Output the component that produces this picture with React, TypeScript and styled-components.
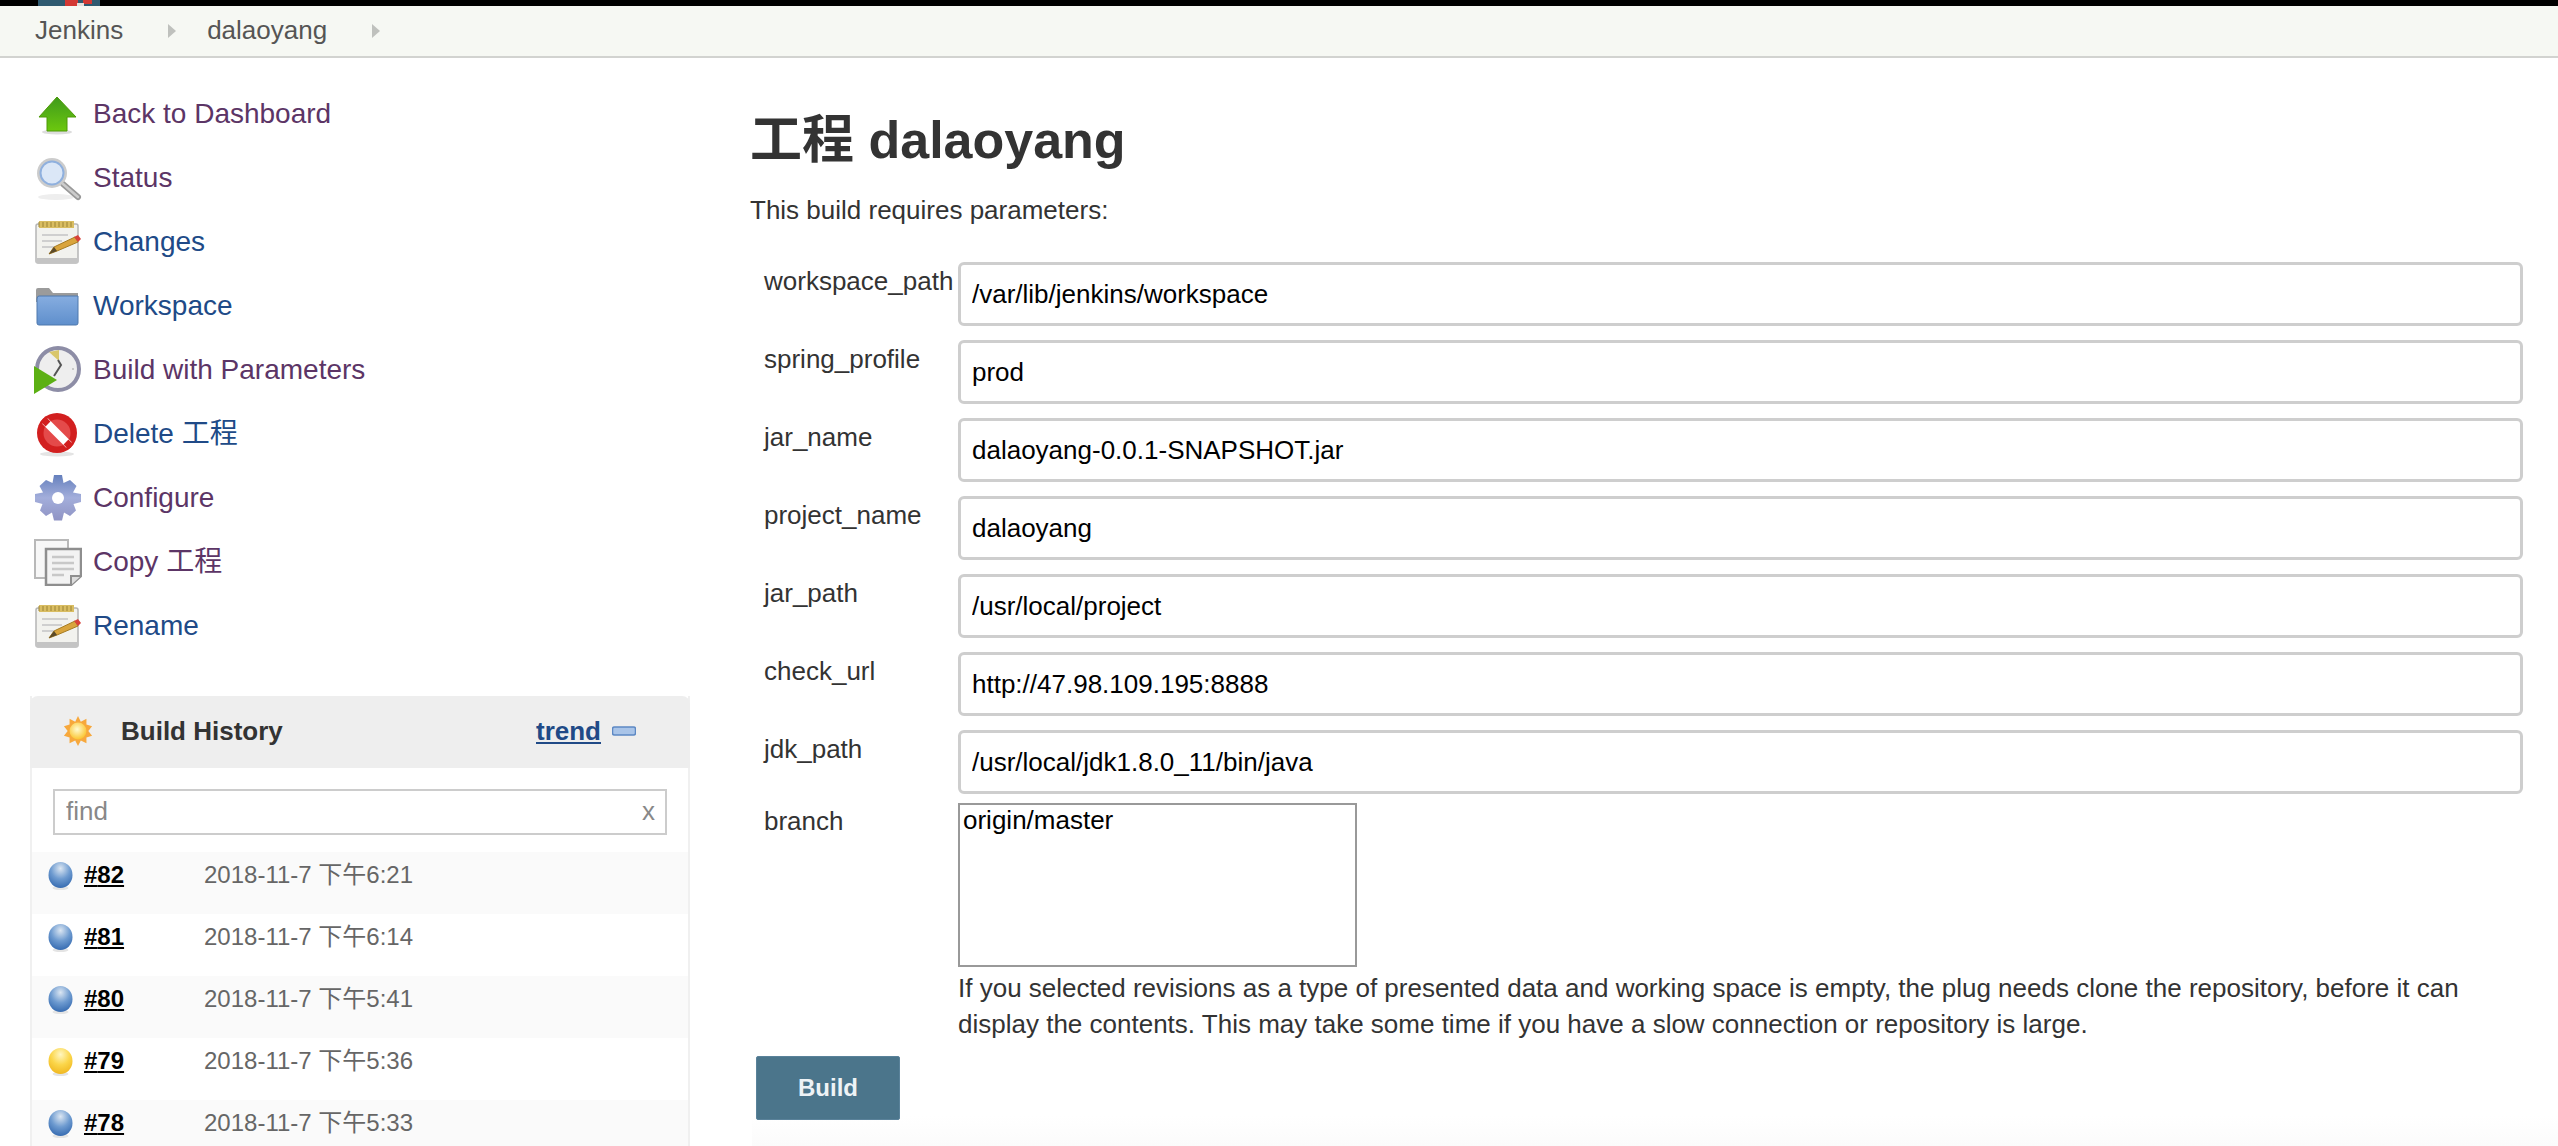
import React from 'react';
import styled, { createGlobalStyle } from 'styled-components';

const GlobalStyle = createGlobalStyle`
  html, body {
    margin: 0;
    padding: 0;
    background: #fff;
    font-family: "Liberation Sans", "Noto Sans CJK SC", sans-serif;
    color: #333;
  }
  * {
    box-sizing: border-box;
  }
`;

const Page = styled.div`
  width: 2558px;
  height: 1146px;
  overflow: hidden;
  display: flex;
  flex-direction: column;
`;

const TopBar = styled.div`
  height: 6px;
  flex: none;
  background: #000;
  padding-left: 37px;
  overflow: hidden;
`;

const LogoSvg = styled.svg`
  display: block;
`;

const Breadcrumbs = styled.nav`
  height: 52px;
  flex: none;
  display: flex;
  align-items: center;
  padding: 0 0 2px 35px;
  background: #f6f8f3;
  border-bottom: 2px solid #d2d3d0;
  font-size: 26px;
  color: #555;
`;

const Crumb = styled.span`
  margin-right: 45px;
`;

const CrumbArrow = styled.span`
  width: 0;
  height: 0;
  margin: 2px 31px 0 0;
  border-style: solid;
  border-width: 7px 0 7px 8px;
  border-color: transparent transparent transparent #bfc1bd;
`;

const Content = styled.div`
  flex: 1;
  display: flex;
  min-height: 0;
`;

const Sidebar = styled.aside`
  width: 752px;
  flex: none;
  padding: 24px 0 0 30px;
`;

const Tasks = styled.div`
  display: flex;
  flex-direction: column;
`;

const Task = styled.a<{ $visited?: boolean }>`
  height: 64px;
  display: flex;
  align-items: center;
  gap: 11px;
  padding-left: 4px;
  font-size: 28px;
  line-height: 30px;
  color: ${(p) => (p.$visited ? '#5c3566' : '#204a87')};
  text-decoration: none;
`;

const HistoryPanel = styled.section`
  width: 660px;
  margin-top: 38px;
  border-left: 2px solid #f0f0f0;
  border-right: 2px solid #f0f0f0;
`;

const HistoryHeader = styled.div`
  height: 72px;
  margin: 0 -2px;
  padding: 0 54px 2px 33px;
  display: flex;
  align-items: center;
  background: #eee;
  border-radius: 8px 8px 0 0;
`;

const HistoryTitle = styled.h2`
  margin: 0 0 0 28px;
  font-size: 26px;
  font-weight: 700;
  color: #333;
`;

const TrendLink = styled.a`
  margin-left: auto;
  margin-right: 11px;
  font-size: 26px;
  font-weight: 700;
  color: #204a87;
  text-decoration: underline;
`;

const FindBox = styled.div`
  height: 46px;
  margin: 21px 21px 17px;
  padding: 0 10px 2px 11px;
  display: flex;
  align-items: center;
  border: 2px solid #ccc;
`;

const FindInput = styled.input`
  flex: 1;
  min-width: 0;
  border: 0;
  padding: 0;
  outline: 0;
  font: 26px "Liberation Sans", sans-serif;

  &::placeholder {
    color: #888;
    opacity: 1;
  }
`;

const FindClear = styled.span`
  font-size: 26px;
  color: #888;
`;

const BuildRow = styled.div<{ $odd: boolean }>`
  height: 62px;
  padding: 10px 0 0 16px;
  display: flex;
  align-items: flex-start;
  background: ${(p) => (p.$odd ? '#fafafa' : '#fff')};
`;

const BuildLink = styled.a`
  width: 120px;
  margin: -1px 0 0 11px;
  font-size: 24px;
  line-height: 28px;
  font-weight: 700;
  color: #000;
  text-decoration: underline;
`;

const BuildTime = styled.span`
  margin-top: -1px;
  font-size: 24px;
  line-height: 28px;
  color: #666;
`;

const Main = styled.main`
  flex: 1;
  padding-top: 52px;
  background: linear-gradient(to bottom, #fff calc(100% - 30px), #fbfbfb 100%);
`;

const Title = styled.h1`
  margin: 0 0 22px -2px;
  font-size: 52px;
  line-height: 60px;
  font-weight: 700;
  color: #333;
`;

const Intro = styled.p`
  margin: 0 0 34px -2px;
  font-size: 26px;
  line-height: 36px;
  color: #333;
`;

const TextParams = styled.div`
  display: grid;
  gap: 14px;
`;

const ParamRow = styled.div`
  display: grid;
  grid-template-columns: 206px 1565px;
  align-items: start;
`;

const BranchRow = styled(ParamRow)`
  margin-top: 9px;
`;

const ParamLabel = styled.label<{ $top: number }>`
  padding: ${(p) => p.$top}px 0 0 12px;
  font-size: 26px;
  line-height: 30px;
  color: #333;
  white-space: nowrap;
`;

const ParamInput = styled.input`
  display: block;
  width: 100%;
  height: 64px;
  padding: 0 11px;
  border: 3px solid #cecece;
  border-radius: 6px;
  outline: 0;
  background: #fff;
  font: 26px "Liberation Sans", sans-serif;
  color: #000;
`;

const BranchSelect = styled.select`
  display: block;
  width: 399px;
  height: 164px;
  padding: 0;
  border: 2px solid #999;
  border-radius: 0;
  outline: 0;
  background: #fff;
  font: 26px "Liberation Sans", sans-serif;
  color: #000;

  option {
    padding: 0 3px;
    line-height: 30px;
    min-height: 30px;
  }
`;

const HelpText = styled.div`
  margin: 3px 0 0 206px;
  width: 1565px;
  font-size: 26px;
  line-height: 36px;
  color: #333;
`;

const BuildButton = styled.button`
  display: block;
  width: 144px;
  height: 64px;
  margin: 14px 0 0 4px;
  border: 1px solid #5a829a;
  border-radius: 2px;
  background: #4b758b;
  font: 700 24px "Liberation Sans", sans-serif;
  color: #eef3f6;
`;

const LogoCrop = () => (
  <LogoSvg width="64" height="6" viewBox="0 0 64 6">
    <rect x="1" width="62" height="6" fill="#2f5a70" />
    <rect x="28" width="13" height="6" fill="#d33833" />
    <rect x="46" width="9" height="4" fill="#d33833" />
    <rect x="40" y="3" width="7" height="3" fill="#e6e0dc" />
  </LogoSvg>
);

const ArrowIcon = () => (
  <svg width="48" height="48" viewBox="0 0 48 48">
    <defs>
      <linearGradient id="arrowFill" x1="0" y1="0" x2="0" y2="1">
        <stop offset="0" stopColor="#3f9a1c" />
        <stop offset="1" stopColor="#6cc80e" />
      </linearGradient>
    </defs>
    <ellipse cx="23" cy="42" rx="15" ry="2.5" fill="#ddd" />
    <path d="M23 7 42 27H33V41H13V27H5Z" fill="url(#arrowFill)" stroke="#4e9a06" strokeWidth="1" />
  </svg>
);

const SearchIcon = () => (
  <svg width="48" height="48" viewBox="0 0 48 48">
    <ellipse cx="22" cy="43" rx="18" ry="3" fill="#eee" />
    <path d="M29 30 44 43" stroke="#999" strokeWidth="6" strokeLinecap="round" />
    <path d="M29 30 44 43" stroke="#ccc" strokeWidth="2.5" strokeLinecap="round" />
    <circle cx="18" cy="19" r="15" fill="#ccc" />
    <circle cx="18" cy="19" r="11.5" fill="#dbe7f7" stroke="#8fb0de" strokeWidth="2" />
  </svg>
);

const NotepadIcon = () => (
  <svg width="48" height="48" viewBox="0 0 48 48">
    <rect x="2" y="6" width="42" height="39" rx="2" fill="#f2f2ee" stroke="#b5b5b5" strokeWidth="1.5" />
    <rect x="2" y="40" width="42" height="5" fill="#c4c4c4" />
    <rect x="5" y="3" width="35" height="7" fill="#d9bd62" />
    <path d="M5 4V9M9 4V9M13 4V9M17 4V9M21 4V9M25 4V9M29 4V9M33 4V9M37 4V9" stroke="#9c8435" strokeWidth="1" />
    <path d="M8 17H34M8 23H28M8 29H20" stroke="#cfcfcf" strokeWidth="2" />
    <path d="M15 36 20 29 41 19 44 24 23 33Z" fill="#d9a43c" stroke="#a67c22" strokeWidth="1" />
    <path d="M40 19 44 17 47 21 44 24Z" fill="#d8423a" />
    <path d="M15 36 20 29 23 33Z" fill="#5a4a2a" />
  </svg>
);

const FolderIcon = () => (
  <svg width="48" height="48" viewBox="0 0 48 48">
    <defs>
      <linearGradient id="folderFill" x1="0" y1="0" x2="0" y2="1">
        <stop offset="0" stopColor="#86ade0" />
        <stop offset="1" stopColor="#5f8fcc" />
      </linearGradient>
    </defs>
    <path d="M2 8Q2 6 4 6H15L19 11H44V20H2Z" fill="#9b9b9b" />
    <path d="M3 17Q3 14 5 14H44V41Q44 43 42 43H5Q3 43 3 41Z" fill="url(#folderFill)" stroke="#4f78ad" strokeWidth="1" />
  </svg>
);

const BuildClockIcon = () => (
  <svg width="48" height="52" viewBox="0 0 48 52">
    <circle cx="24" cy="25" r="21" fill="#eeeeee" stroke="#8d8da6" strokeWidth="4" />
    <path d="M15 8 25 6V17Z" fill="#d9c66a" />
    <path d="M24 16 27 21 20 32" fill="none" stroke="#555" strokeWidth="2" />
    <circle cx="39" cy="25" r="1" fill="#bbb" />
    <path d="M0 22 23 36 0 50Z" fill="#5cb014" />
  </svg>
);

const DeleteIcon = () => (
  <svg width="48" height="48" viewBox="0 0 48 48">
    <ellipse cx="23" cy="44" rx="17" ry="2.5" fill="#e4e4e4" />
    <circle cx="23" cy="23" r="20" fill="#d21f1f" />
    <circle cx="23" cy="23" r="13.5" fill="#e44a4a" />
    <path d="M11 11 35 35" stroke="#fff" strokeWidth="8" />
    <path d="M9 9 14 14M32 32 37 37" stroke="#d21f1f" strokeWidth="7" />
  </svg>
);

const GearIcon = () => (
  <svg width="48" height="48" viewBox="0 0 48 48">
    <defs>
      <linearGradient id="gearFill" x1="0" y1="0" x2="0" y2="1">
        <stop offset="0" stopColor="#6580bd" />
        <stop offset="0.5" stopColor="#a3aedb" />
        <stop offset="1" stopColor="#8f93c4" />
      </linearGradient>
    </defs>
    <g fill="url(#gearFill)">
      <path d="M20 1H28L29.5 9 36 6 42.5 12 39 18.5 47 20V28L39.5 30 42 36.5 36 42 30 38.5 28 46.5H20L18 38.5 12 42 6 36.5 8.5 30 1 28V20L9 18.5 5.5 12 12 6 18.5 9Z" />
    </g>
    <circle cx="24" cy="24" r="6" fill="#fff" />
  </svg>
);

const CopyIcon = () => (
  <svg width="48" height="48" viewBox="0 0 48 48">
    <rect x="1" y="2" width="33" height="38" fill="#f7f7f7" stroke="#b8b8b8" strokeWidth="2" />
    <path d="M12 11H47V38L37 47H12Z" fill="#f3f3f3" stroke="#8e8e8e" strokeWidth="2.5" />
    <path d="M37 47V38H47" fill="#ddd" stroke="#8e8e8e" strokeWidth="2" />
    <path d="M18 19H40M18 25H40M18 31H40M18 37H30" stroke="#c8c8c8" strokeWidth="2.5" />
  </svg>
);

const SunIcon = () => (
  <svg width="30" height="32" viewBox="0 0 32 34">
    <defs>
      <radialGradient id="sunFill" cx="0.45" cy="0.4" r="0.6">
        <stop offset="0" stopColor="#fffbd0" />
        <stop offset="1" stopColor="#fbc531" />
      </radialGradient>
    </defs>
    <path d="M16 1 19 7 25 4 25 10 31 12 27 17 31 22 25 24 25 30 19 27 16 33 13 27 7 30 7 24 1 22 5 17 1 12 7 10 7 4 13 7Z" fill="#f7a83c" />
    <circle cx="16" cy="17" r="9" fill="url(#sunFill)" />
  </svg>
);

const MinusIcon = () => (
  <svg width="24" height="10" viewBox="0 0 24 10">
    <rect x="0.5" y="1" width="23" height="8" rx="2" fill="#a9c4e8" stroke="#5c88c4" strokeWidth="1.5" />
  </svg>
);

const Ball = ({ color }: { color: 'blue' | 'yellow' }) => {
  const id = `ball-${color}`;
  const stops = color === 'blue' ? ['#dbe6f2', '#6e9bd0', '#2f65ad'] : ['#fff6c0', '#fbd64a', '#efb41c'];
  return (
    <svg width="25" height="28" viewBox="0 0 25 28">
      <defs>
        <radialGradient id={id} cx="0.5" cy="0.25" r="0.8">
          <stop offset="0" stopColor={stops[0]} />
          <stop offset="0.5" stopColor={stops[1]} />
          <stop offset="1" stopColor={stops[2]} />
        </radialGradient>
      </defs>
      <ellipse cx="12.5" cy="26" rx="8" ry="2" fill="#e4e4e4" />
      <ellipse cx="12.5" cy="13" rx="12" ry="13" fill={`url(#${id})`} />
    </svg>
  );
};

const tasks = [
  { label: 'Back to Dashboard', icon: <ArrowIcon />, visited: true },
  { label: 'Status', icon: <SearchIcon />, visited: true },
  { label: 'Changes', icon: <NotepadIcon /> },
  { label: 'Workspace', icon: <FolderIcon /> },
  { label: 'Build with Parameters', icon: <BuildClockIcon />, visited: true },
  { label: 'Delete 工程', icon: <DeleteIcon /> },
  { label: 'Configure', icon: <GearIcon />, visited: true },
  { label: 'Copy 工程', icon: <CopyIcon />, visited: true },
  { label: 'Rename', icon: <NotepadIcon /> },
];

const builds: { id: number; time: string; color: 'blue' | 'yellow' }[] = [
  { id: 82, time: '2018-11-7 下午6:21', color: 'blue' },
  { id: 81, time: '2018-11-7 下午6:14', color: 'blue' },
  { id: 80, time: '2018-11-7 下午5:41', color: 'blue' },
  { id: 79, time: '2018-11-7 下午5:36', color: 'yellow' },
  { id: 78, time: '2018-11-7 下午5:33', color: 'blue' },
];

const params = [
  { name: 'workspace_path', value: '/var/lib/jenkins/workspace' },
  { name: 'spring_profile', value: 'prod' },
  { name: 'jar_name', value: 'dalaoyang-0.0.1-SNAPSHOT.jar' },
  { name: 'project_name', value: 'dalaoyang' },
  { name: 'jar_path', value: '/usr/local/project' },
  { name: 'check_url', value: 'http://47.98.109.195:8888' },
  { name: 'jdk_path', value: '/usr/local/jdk1.8.0_11/bin/java' },
];

const App: React.FC = () => (
  <Page>
    <GlobalStyle />
    <TopBar>
      <LogoCrop />
    </TopBar>
    <Breadcrumbs>
      <Crumb>Jenkins</Crumb>
      <CrumbArrow />
      <Crumb>dalaoyang</Crumb>
      <CrumbArrow />
    </Breadcrumbs>
    <Content>
      <Sidebar>
        <Tasks>
          {tasks.map((task) => (
            <Task key={task.label} $visited={task.visited}>
              {task.icon}
              {task.label}
            </Task>
          ))}
        </Tasks>
        <HistoryPanel>
          <HistoryHeader>
            <SunIcon />
            <HistoryTitle>Build History</HistoryTitle>
            <TrendLink>trend</TrendLink>
            <MinusIcon />
          </HistoryHeader>
          <FindBox>
            <FindInput placeholder="find" />
            <FindClear>x</FindClear>
          </FindBox>
          {builds.map((build, i) => (
            <BuildRow key={build.id} $odd={i % 2 === 0}>
              <Ball color={build.color} />
              <BuildLink>#{build.id}</BuildLink>
              <BuildTime>{build.time}</BuildTime>
            </BuildRow>
          ))}
        </HistoryPanel>
      </Sidebar>
      <Main>
        <Title>工程 dalaoyang</Title>
        <Intro>This build requires parameters:</Intro>
        <TextParams>
          {params.map((param) => (
            <ParamRow key={param.name}>
              <ParamLabel $top={4}>{param.name}</ParamLabel>
              <ParamInput value={param.value} readOnly />
            </ParamRow>
          ))}
        </TextParams>
        <BranchRow>
          <ParamLabel $top={3}>branch</ParamLabel>
          <BranchSelect multiple size={5} defaultValue={[]}>
            <option>origin/master</option>
          </BranchSelect>
        </BranchRow>
        <HelpText>
          If you selected revisions as a type of presented data and working space is empty, the plug needs clone the
          repository, before it can display the contents. This may take some time if you have a slow connection or
          repository is large.
        </HelpText>
        <BuildButton>Build</BuildButton>
      </Main>
    </Content>
  </Page>
);

export default App;
